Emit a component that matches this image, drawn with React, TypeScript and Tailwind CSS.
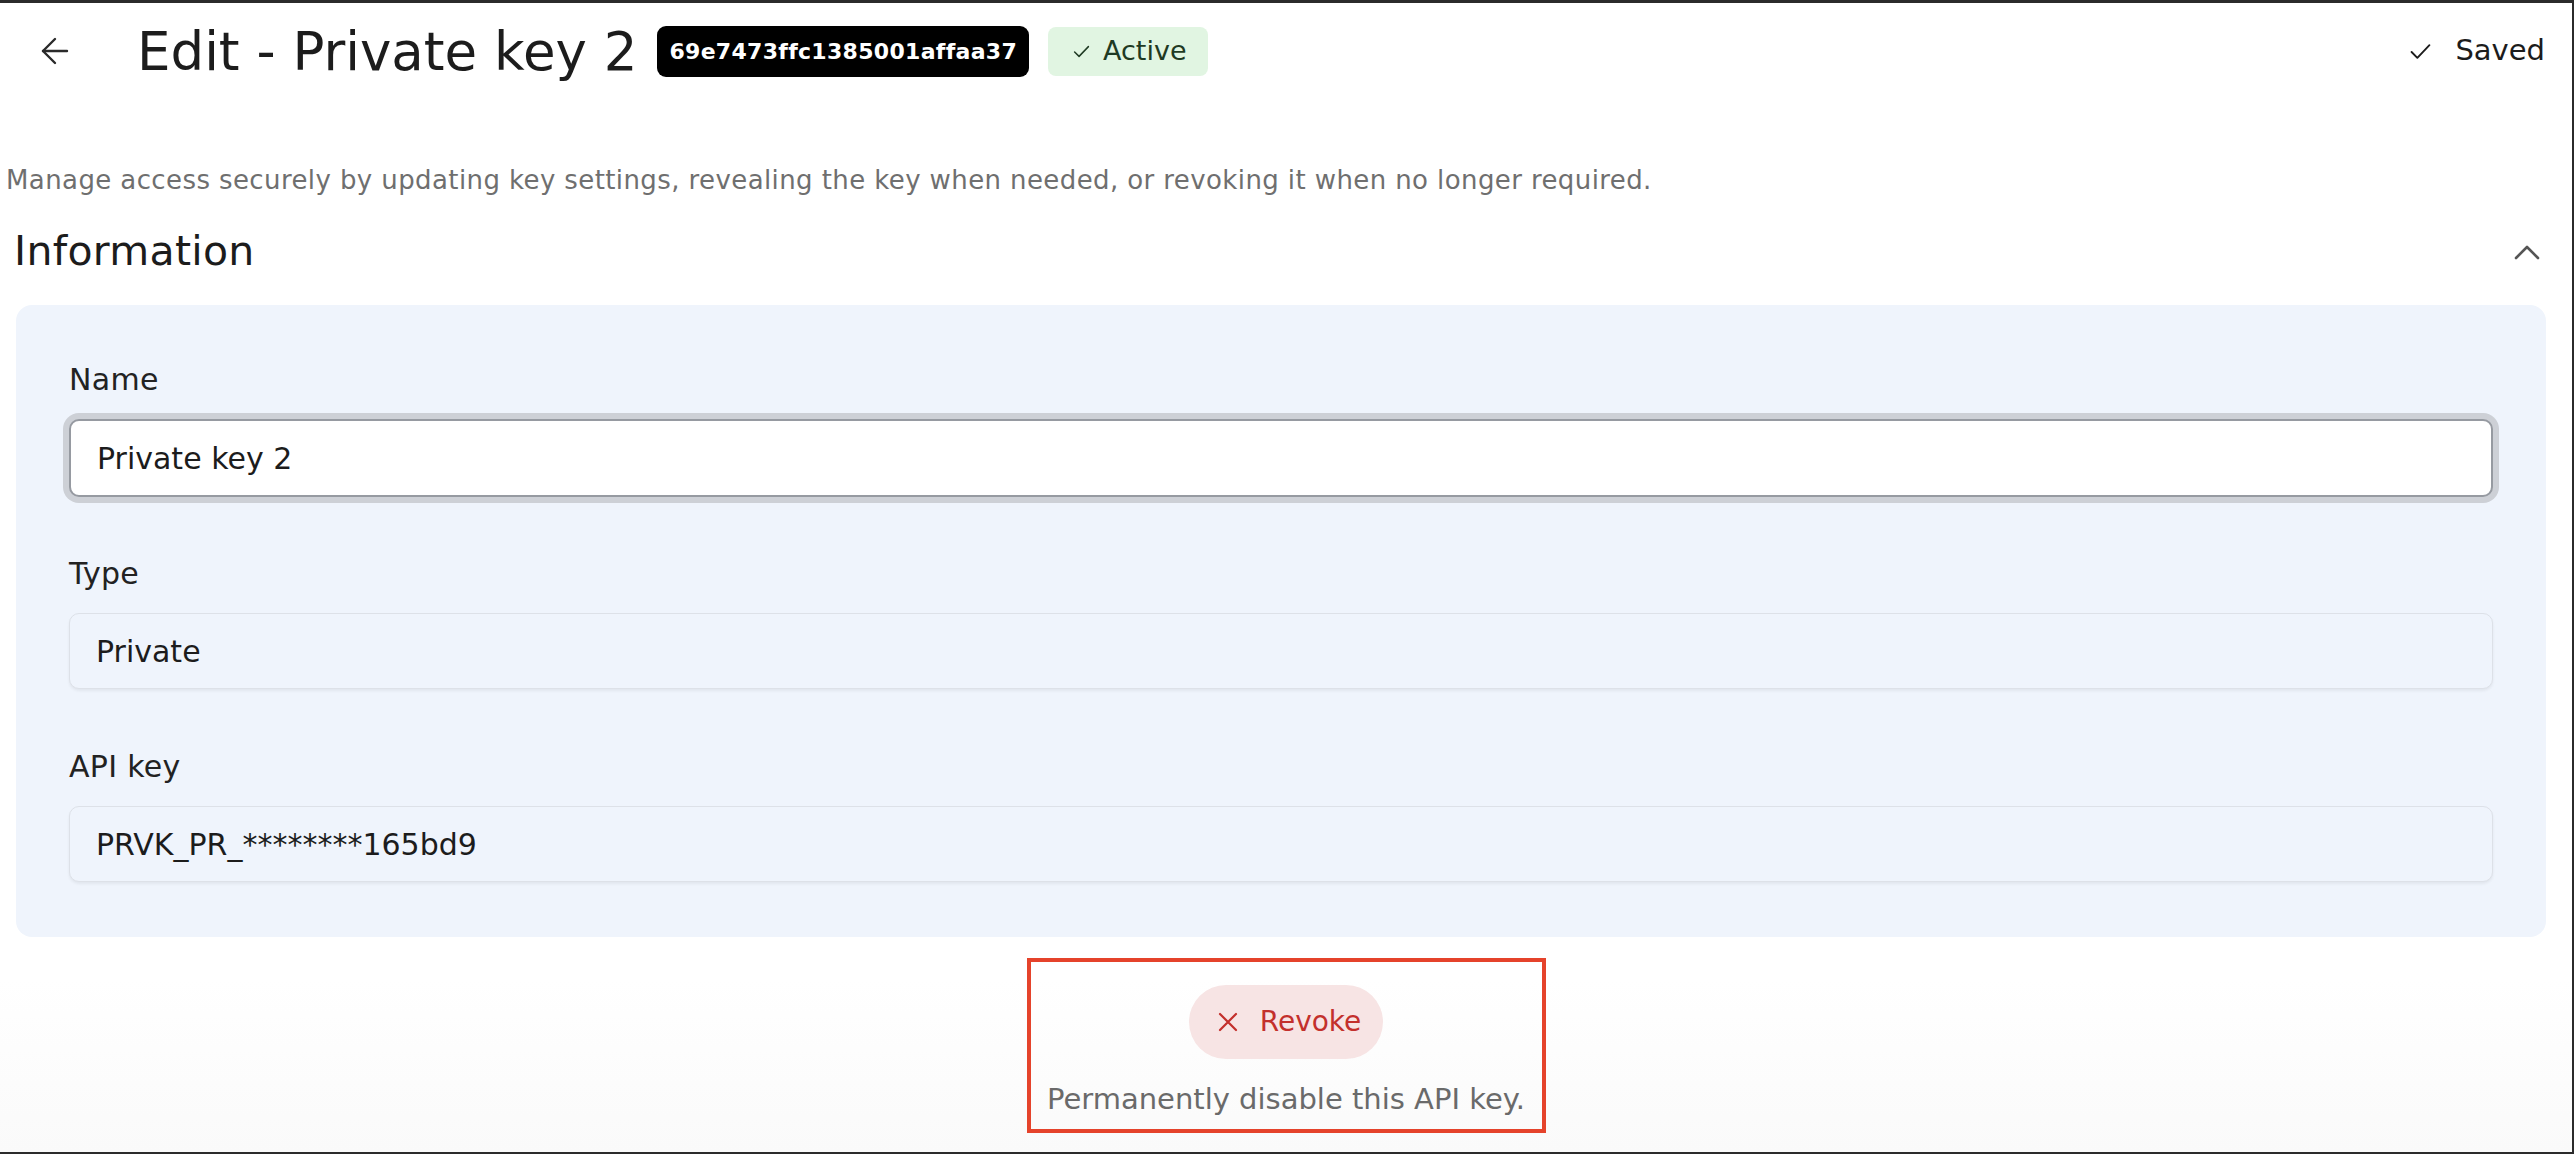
import React from 'react';

const ArrowLeftIcon = () => (
  <svg width="28" height="28" viewBox="0 0 28 28" fill="none" stroke="currentColor" strokeWidth="2.4" strokeLinecap="round" strokeLinejoin="round">
    <path d="M26 14H2" />
    <path d="M14 2 2 14l12 12" />
  </svg>
);

const ChevronUpIcon = () => (
  <svg width="26" height="16" viewBox="0 0 26 16" fill="none" stroke="currentColor" strokeWidth="2.6" strokeLinecap="round" strokeLinejoin="round">
    <path d="M2 14 13 3l11 11" />
  </svg>
);

const CheckIcon = ({ className = '' }: { className?: string }) => (
  <svg className={className} viewBox="0 0 20 16" fill="none" stroke="currentColor" strokeWidth="1.8" strokeLinecap="round" strokeLinejoin="round">
    <path d="M1.5 8.5 7 14 18.5 2" />
  </svg>
);

const XIcon = () => (
  <svg width="20" height="20" viewBox="0 0 20 20" fill="none" stroke="currentColor" strokeWidth="2.2" strokeLinecap="round">
    <path d="M2 2l16 16M18 2 2 18" />
  </svg>
);

interface FieldProps {
  label: string;
  value: string;
  editable?: boolean;
  className?: string;
}

const Field: React.FC<FieldProps> = ({ label, value, editable = false, className = '' }) => (
  <div className={className}>
    <div className="text-[30px] leading-none tracking-[0.3px] text-[#222]">{label}</div>
    {editable ? (
      <div className="mt-[24px] flex h-[78px] items-center rounded-[10px] border-2 border-[#969aa1] bg-white pl-[26px] text-[30px] text-[#1c1c1c] shadow-[0_0_0_6px_#cdd0d6]">
        {value}
      </div>
    ) : (
      <div className="mt-[24px] flex h-[76px] items-center rounded-[10px] border-[1.5px] border-[#dde1e8] bg-[#eff4fc] pl-[26px] text-[30px] text-[#1c1c1c] shadow-[0_2px_3px_rgba(0,0,0,0.06)]">
        {value}
      </div>
    )}
  </div>
);

export default function App() {
  return (
    <div className="box-border h-[1154px] w-full border-t-[3px] border-r-2 border-b-2 border-[#2b2b2b] bg-gradient-to-b from-white from-85% to-[#fafafa] font-['DejaVu_Sans',sans-serif]">
      {/* header */}
      <div className="flex h-[96px] items-center pl-[41px] pr-[27px]">
        <button className="text-[#2a2a2a]">
          <ArrowLeftIcon />
        </button>
        <h1 className="ml-[68px] text-[53px] leading-none text-[#1c1c1c]">Edit - Private key 2</h1>
        <span className="ml-[20px] flex h-[51px] items-center rounded-[9px] bg-black px-[12px] text-[22px] font-bold tracking-[0.3px] text-white">
          69e7473ffc1385001affaa37
        </span>
        <span className="ml-[19px] flex h-[49px] items-center gap-[13px] rounded-[8px] bg-[#e1f5e2] pl-[25px] pr-[21px] text-[27px] text-[#1f3a23]">
          <CheckIcon className="h-[13px] w-[17px]" />
          Active
        </span>
        <div className="ml-auto flex items-center gap-[24px] text-[29px] text-[#1c1c1c]">
          <CheckIcon className="h-[17px] w-[21px]" />
          Saved
        </div>
      </div>

      <p className="mt-[68px] pl-[6px] text-[26px] leading-none tracking-[0.4px] text-[#6f6f6f]">
        Manage access securely by updating key settings, revealing the key when needed, or revoking it when no longer required.
      </p>

      <div className="mt-[38px] flex items-center justify-between pl-[14px] pr-[32px]">
        <h2 className="text-[41px] leading-none tracking-[0.3px] text-[#1c1c1c]">Information</h2>
        <span className="text-[#555]">
          <ChevronUpIcon />
        </span>
      </div>

      <section className="ml-[16px] mr-[26px] mt-[33px] rounded-[16px] bg-[#eff4fc] px-[53px] pb-[55px] pt-[60px]">
        <Field label="Name" value="Private key 2" editable />
        <Field label="Type" value="Private" className="mt-[62px]" />
        <Field label="API key" value="PRVK_PR_********165bd9" className="mt-[63px]" />
      </section>

      <div className="mx-auto mt-[21px] flex w-[519px] flex-col items-center border-4 border-[#e5432b] pb-[15px] pt-[23px]">
        <button className="flex h-[74px] items-center gap-[22px] rounded-full bg-[#f7e4e4] pl-[29px] pr-[22px] text-[28px] text-[#c3302c]">
          <XIcon />
          Revoke
        </button>
        <p className="mt-[26px] text-[29px] leading-none text-[#6a6a6a]">Permanently disable this API key.</p>
      </div>
    </div>
  );
}
